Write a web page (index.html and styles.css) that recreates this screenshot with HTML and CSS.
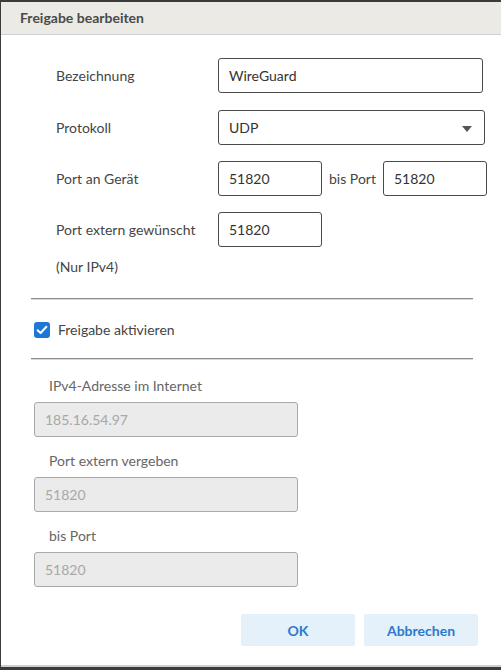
FILE: index.html
```html
<!DOCTYPE html>
<html lang="de">
<head>
<meta charset="utf-8">
<title>Freigabe bearbeiten</title>
<link rel="stylesheet" href="styles.css">
</head>
<body>
<div class="dialog">
  <div class="header">Freigabe bearbeiten</div>
  <div class="content">
    <div class="form">
      <div class="label">Bezeichnung</div>
      <div class="field"><div class="input wide">WireGuard</div></div>

      <div class="label">Protokoll</div>
      <div class="field"><div class="input select">UDP<span class="arrow"></span></div></div>

      <div class="label">Port an Gerät</div>
      <div class="field"><div class="input short">51820</div><span class="between">bis Port</span><div class="input short">51820</div></div>

      <div class="label">Port extern gewünscht</div>
      <div class="field"><div class="input short">51820</div></div>
    </div>
    <div class="note">(Nur IPv4)</div>
    <div class="rule"></div>
    <label class="check-row"><span class="checkbox"><svg viewBox="0 0 16 16" width="16" height="16"><path d="M3.6 8.2 L6.6 11 L12.4 4.8" fill="none" stroke="#fff" stroke-width="2" stroke-linecap="round" stroke-linejoin="round"/></svg></span>Freigabe aktivieren</label>
    <div class="rule second"></div>
    <div class="readonly">
      <div class="ro-label">IPv4-Adresse im Internet</div>
      <div class="ro-input">185.16.54.97</div>
      <div class="ro-label">Port extern vergeben</div>
      <div class="ro-input">51820</div>
      <div class="ro-label">bis Port</div>
      <div class="ro-input">51820</div>
    </div>
    <div class="buttons">
      <button class="btn">OK</button>
      <button class="btn">Abbrechen</button>
    </div>
  </div>
</div>
</body>
</html>
```
FILE: styles.css
```css
html, body {
  margin: 0;
  padding: 0;
  background: #3b3b3b;
  height: 670px;
  overflow: hidden;
}
body {
  font-family: "Lato", "Open Sans", sans-serif;
  font-size: 14px;
  color: #454545;
}
.dialog {
  margin: 2px 0 0 1px;
  height: 665px;
  background: #fff;
  border-bottom: 2px solid #cfcfcf;
  box-sizing: border-box;
}
.header {
  height: 32px;
  line-height: 32px;
  background: #ebeae4;
  border-bottom: 1px solid #cfcfcf;
  padding-left: 19px;
  font-weight: bold;
  color: #4a4a4a;
}
.content {
  padding: 23px 23px 0 30px;
}
.form {
  display: grid;
  grid-template-columns: 162px max-content;
  row-gap: 16px;
  padding-left: 25px;
}
.label {
  display: flex;
  align-items: center;
}
.field {
  display: flex;
  align-items: center;
  white-space: nowrap;
}
.input {
  height: 35px;
  box-sizing: border-box;
  border: 1px solid #4a4a4a;
  border-radius: 3px;
  padding: 0 10px;
  display: flex;
  align-items: center;
  color: #333;
}
.wide { width: 265px; }
.select { width: 267px; position: relative; margin-top: 1px; }
.short { width: 104px; }
.arrow {
  position: absolute;
  right: 12px;
  top: 15px;
  width: 0;
  height: 0;
  border-left: 5px solid transparent;
  border-right: 5px solid transparent;
  border-top: 6px solid #555;
}
.between {
  margin: 0 7px;
}
.note {
  padding-left: 25px;
  margin-top: 10px;
  line-height: 20px;
}
.rule {
  margin-top: 21px;
  width: 442px;
  border-top: 1px solid #8e8e8e;
  border-bottom: 1px solid #d8d8d8;
}
.rule.second {
  margin-top: 18px;
}
.check-row {
  display: flex;
  align-items: center;
  margin-top: 20px;
  padding-left: 3px;
  line-height: 20px;
}
.checkbox {
  width: 16px;
  height: 16px;
  border-radius: 3px;
  background: #1e77d3;
  margin-right: 8px;
  display: flex;
}
.readonly {
  display: flex;
  flex-direction: column;
  padding-top: 16px;
  padding-left: 3px;
}
.ro-label {
  line-height: 20px;
  padding-left: 15px;
  color: #666;
  margin-bottom: 6px;
}
.ro-input {
  width: 264px;
  height: 35px;
  box-sizing: border-box;
  border: 1px solid #a9a9a9;
  border-radius: 3px;
  background: #eaebea;
  color: #a8a8a8;
  padding: 0 10px;
  display: flex;
  align-items: center;
  margin-bottom: 14px;
}
.buttons {
  display: flex;
  justify-content: flex-end;
  gap: 9px;
  margin-top: 13px;
}
.btn {
  width: 114px;
  height: 32px;
  border: none;
  border-radius: 2px;
  background: #e4f0fa;
  color: #2b79cf;
  font-family: "Lato", "Open Sans", sans-serif;
  font-size: 14px;
  font-weight: bold;
}
```
